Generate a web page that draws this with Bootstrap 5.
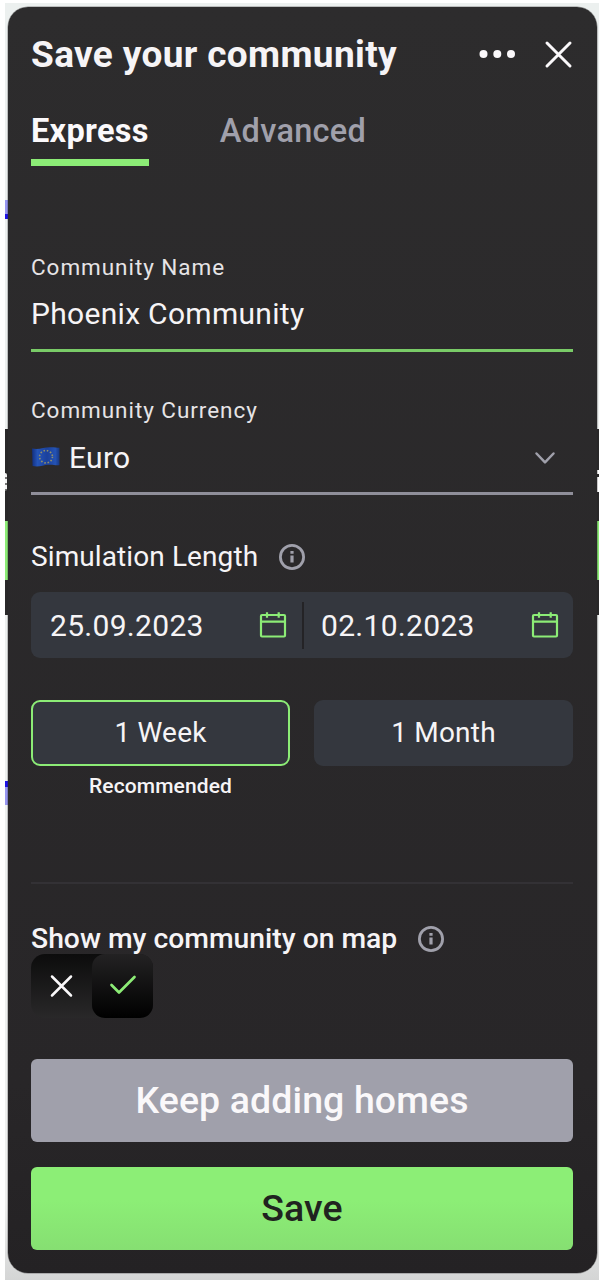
<!DOCTYPE html>
<html lang="en">
<head>
<meta charset="utf-8">
<title>Save your community</title>
<link href="https://cdn.jsdelivr.net/npm/bootstrap@5.3.0/dist/css/bootstrap.min.css" rel="stylesheet">
<style>
  :root { --lime: #8cec76; --muted: #a0a0ab; --field: #34373e; }
  body { font-family: Roboto, sans-serif; color: #f6f4f6; background: #fff; height: 1280px; overflow: hidden; }
  .stage { height: 1280px; padding: 7px 9px 0 8px; }
  .backdrop { left: 5px; right: 7px; top: 3px; bottom: 0; background: linear-gradient(#ecf0ef 0, #eff0ef 1200px, #d4d5d5 100%); overflow: hidden; }
  .backdrop .band { top: 426px; height: 186px; background: #292829; }
  .backdrop .stripe { top: 518px; height: 59px; background: var(--lime); }
  .backdrop .letter { left: 0; width: 2px; background: repeating-linear-gradient(#f3f3f3 0 4px, #777 4px 6px); border-radius: 0 2px 2px 0; }
  .backdrop .trace { left: 0; width: 3px; height: 19px; background: linear-gradient(#9796f0 75%, #1d12e6 75%); }
  .backdrop .trace.flip { transform: scaleY(-1); height: 24px; }
  .panel { height: 1266px; padding: 0 24px 0 23px; border-radius: 20px; background: linear-gradient(#2d2c2d, #282628 85%, #242224); box-shadow: 0 0 0 .5px rgba(40,38,40,.5); }
  .head { height: 94px; }
  .title { font-size: 37px; font-weight: 700; line-height: 94px; letter-spacing: .35px; padding-top: 2px; }
  .tabs { height: 65px; gap: 71px; font-size: 32.5px; letter-spacing: .3px; line-height: 61px; }
  .tabs a { color: var(--muted); text-decoration: none; font-weight: 500; height: 65px; }
  .tabs a.active { color: #fbf9fb; font-weight: 700; border-bottom: 7px solid var(--lime); }
  .label-s { font-size: 22.5px; line-height: 30px; height: 30px; letter-spacing: .95px; color: #e6e4e6; }
  .value { font-size: 30px; height: 66px; line-height: 56px; letter-spacing: .3px; }
  .line-lime { border-bottom: 3px solid #79cb67; }
  .line-muted { border-bottom: 3px solid #8f8e99; padding-bottom: 6px; }
  .dates { height: 66px; border-radius: 9px; background: var(--field); font-size: 30px; letter-spacing: .3px; }
  .from { flex: 0 0 271px; padding: 0 15px 0 19px; }
  .until { padding: 0 14px 0 17px; }
  .sep { width: 2px; height: 47px; background: #242326; }
  .choice { height: 66px; border-radius: 9px; background: var(--field); font-size: 28px; color: inherit; border: 0; padding: 0; letter-spacing: .2px; line-height: 64px; }
  .choice.on { border: 2px solid var(--lime); line-height: 60px; }
  .tip { font-size: 21px; line-height: 40px; font-weight: 500; letter-spacing: .1px; }
  .rule { height: 2px; background: #333135; }
  .toggle { width: 122px; height: 64px; border-radius: 14px; background: linear-gradient(#0c0c0c, #292829); }
  .toggle .knob { width: 61px; border-radius: 13px; background: linear-gradient(#232223, #000); }
  .toggle svg { margin-bottom: 1px; }
  .act { height: 83px; border: 0; border-radius: 6px; font-size: 37.5px; font-weight: 500; padding: 0; line-height: 83px; letter-spacing: .1px; }
  .act.keep { background: var(--muted); color: #faf8fa; }
  .act.save { background: linear-gradient(#8cee76 40%, #86df72); color: #202320; }
  svg { display: block; flex: none; }
</style>
</head>
<body>
<div class="stage position-relative">
  <div class="backdrop position-absolute">
    <div class="band position-absolute start-0 end-0"></div>
    <div class="stripe position-absolute start-0 end-0"></div>
    <div class="trace position-absolute" style="top:197px"></div>
    <div class="trace flip position-absolute" style="top:778px"></div>
    <div class="letter position-absolute" style="top:470px;height:18px"></div>
    <div class="position-absolute end-0 bg-white" style="top:467px;width:3px;height:4px"></div>
    <div class="position-absolute end-0 bg-white" style="top:474px;width:3px;height:15px"></div>
  </div>

  <main class="panel position-relative d-flex flex-column">
    <header class="head d-flex align-items-center">
      <h1 class="title mb-0 me-auto text-nowrap">Save your community</h1>
      <svg width="38" height="28" viewBox="0 0 38 28" fill="#fbf9fb"><circle cx="5.500" cy="14" r="4"/><circle cx="19.300" cy="14" r="4"/><circle cx="33" cy="14" r="4"/></svg>
      <svg width="30" height="30" viewBox="0 0 30 30" stroke="#fbf9fb" stroke-width="3" stroke-linecap="round" style="margin-left:27px"><path d="M4 4l23 23M27 4l-23 23"/></svg>
    </header>

    <nav class="tabs d-flex">
      <a href="#" class="active">Express</a>
      <a href="#">Advanced</a>
    </nav>

    <section style="margin-top:86px">
      <div class="label-s">Community Name</div>
      <div class="value line-lime mt-1">Phoenix Community</div>
    </section>

    <section style="margin-top:43px">
      <div class="label-s">Community Currency</div>
      <div class="value line-muted mt-1 d-flex align-items-center">
        <svg width="29" height="20" viewBox="0 0 28 20" preserveAspectRatio="none" style="margin-bottom:2px"><defs><linearGradient id="flag"><stop stop-color="#122f80"/><stop offset=".2" stop-color="#2454b8"/><stop offset=".55" stop-color="#1b419c"/><stop offset=".85" stop-color="#2453b4"/><stop offset="1" stop-color="#173780"/></linearGradient></defs><path d="M1 1.500C8 3 12 .2 19 .3c4 0 6 .5 8.500.5V18c-3 .6-6-.5-10-.3C11 18 8 20.500 1.500 19z" fill="url(#flag)"/><circle cx="14.500" cy="9.700" r="6.200" fill="none" stroke="#8f8f6c" stroke-width="1.600" stroke-dasharray="1.500 1.746"/></svg>
        <span class="me-auto" style="margin-left:9px">Euro</span>
        <svg width="22" height="14" viewBox="0 0 22 14" fill="none" stroke="#a0a0ab" stroke-width="2.500" stroke-linecap="round" stroke-linejoin="round" style="margin-right:17px"><path d="M2.500 2.500l8.500 8.800 8.500-8.800"/></svg>
      </div>
    </section>

    <div class="d-flex align-items-center" style="margin-top:42px;height:40px">
      <span style="font-size:28px;letter-spacing:.1px">Simulation Length</span>
      <svg width="28" height="28" viewBox="0 0 28 28" style="margin-left:20px"><circle cx="14" cy="14" r="11.600" fill="none" stroke="#a0a0ab" stroke-width="2.800"/><path d="M12.400 8h3.200v2.800h-3.200zM12.400 12.500h3.200v7h-3.200z" fill="#a0a0ab"/></svg>
    </div>
    <div class="dates d-flex align-items-center" style="margin-top:15px">
      <div class="from d-flex align-items-center">
        <span class="me-auto">25.09.2023</span>
        <svg width="28" height="27" viewBox="0 0 28 27" fill="none" stroke="#8cec76" stroke-width="2.200"><rect x="2" y="3" width="24" height="21.500" rx="1"/><path d="M2 9.700h24M8 .3v5.500M19.700 .3v5.500"/></svg>
      </div>
      <div class="sep"></div>
      <div class="until d-flex flex-fill align-items-center">
        <span class="me-auto">02.10.2023</span>
        <svg width="28" height="27" viewBox="0 0 28 27" fill="none" stroke="#8cec76" stroke-width="2.200"><rect x="2" y="3" width="24" height="21.500" rx="1"/><path d="M2 9.700h24M8 .3v5.500M19.700 .3v5.500"/></svg>
      </div>
    </div>

    <div class="d-flex" style="margin-top:42px;gap:24px">
      <div class="w-50">
        <button class="choice on w-100 d-block">1 Week</button>
        <div class="tip text-center">Recommended</div>
      </div>
      <div class="w-50"><button class="choice w-100 d-block">1 Month</button></div>
    </div>

    <div class="rule" style="margin-top:76px"></div>

    <div class="d-flex align-items-center" style="margin-top:40px;height:30px">
      <span style="font-size:28.3px;font-weight:500">Show my community on map</span>
      <svg width="28" height="28" viewBox="0 0 28 28" style="margin-left:20px"><circle cx="14" cy="14" r="11.600" fill="none" stroke="#a0a0ab" stroke-width="2.800"/><path d="M12.400 8h3.200v2.800h-3.200zM12.400 12.500h3.200v7h-3.200z" fill="#a0a0ab"/></svg>
    </div>
    <div class="toggle d-flex">
      <div class="flex-fill d-flex align-items-center justify-content-center"><svg width="24" height="24" viewBox="0 0 24 24" stroke="#fbf9fb" stroke-width="2.500" stroke-linecap="round"><path d="M2 2.500l19 19M21 2.500L2 21.500"/></svg></div>
      <div class="knob d-flex align-items-center justify-content-center"><svg width="28" height="22" viewBox="0 0 28 22" fill="none" stroke="#8cec76" stroke-width="2.700" stroke-linecap="round" stroke-linejoin="round"><path d="M2.500 10l7.500 7.500L25.500 2"/></svg></div>
    </div>

    <button class="act keep" style="margin-top:41px">Keep adding homes</button>
    <button class="act save" style="margin-top:25px">Save</button>
  </main>
</div>
<script src="https://cdn.jsdelivr.net/npm/bootstrap@5.3.0/dist/js/bootstrap.bundle.min.js"></script>
</body>
</html>
